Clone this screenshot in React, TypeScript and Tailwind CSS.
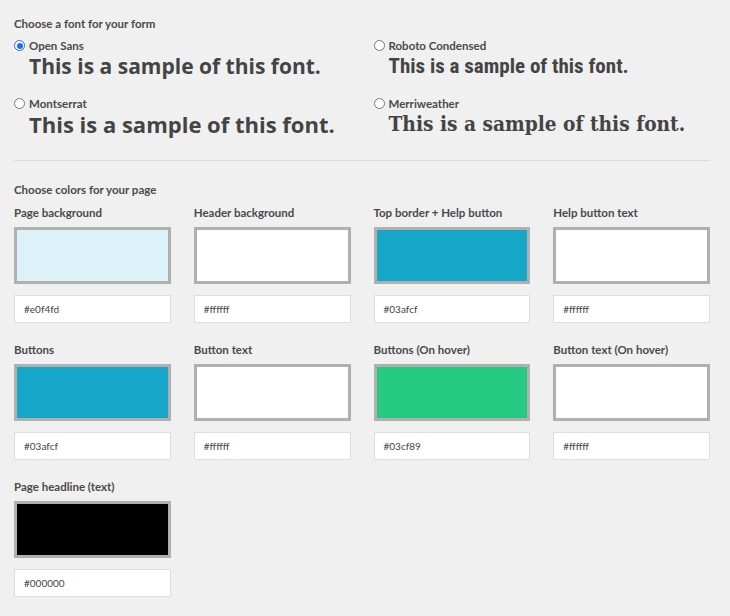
import React from "react";

const label = { fontFamily: "Lato, 'Open Sans', sans-serif" } as React.CSSProperties;

function Radio({ checked }: { checked?: boolean }) {
  return checked ? (
    <span className="w-[11px] h-[11px] rounded-full border border-[#1a73e8] bg-white flex items-center justify-center shrink-0">
      <span className="w-[6px] h-[6px] rounded-full bg-[#1a73e8]" />
    </span>
  ) : (
    <span className="w-[11px] h-[11px] rounded-full border border-[#767676] bg-white shrink-0" />
  );
}

function FontOption({ name, checked, sampleClass }: { name: string; checked?: boolean; sampleClass: string }) {
  return (
    <div className="flex flex-col">
      <div className="flex items-center gap-[4px] h-[13px]">
        <Radio checked={checked} />
        <span className="text-[11.5px] font-bold text-[#4a4a4a] leading-[13px]" style={label}>{name}</span>
      </div>
      <div className={"ml-[15px] text-[#444] font-bold whitespace-nowrap h-[28px] leading-[28px] " + sampleClass}>This is a sample of this font.</div>
    </div>
  );
}

function ColorField({ name, color, value }: { name: string; color: string; value: string }) {
  return (
    <div className="flex flex-col">
      <div className="text-[11.5px] font-bold text-[#4a4a4a] leading-[14px] mb-[7px]" style={label}>{name}</div>
      <div className="h-[57px] border-[3px] border-[#b0b0b0]" style={{ backgroundColor: color }} />
      <div className="mt-[11px] h-[28px] bg-white border border-[#dedede] flex items-center px-[9px] text-[10px] text-[#444]" style={label}>{value}</div>
    </div>
  );
}

export default function App() {
  return (
    <div className="w-[730px] h-[616px] bg-[#f0f0f0] px-[14px] pt-[17px] overflow-hidden">
      <div className="w-[696px]">
        <div className="text-[11.5px] font-bold text-[#4a4a4a] leading-[14px]" style={label}>Choose a font for your form</div>
        <div className="grid grid-cols-2 gap-x-[23px] gap-y-[17px] mt-[8px]">
          <FontOption name="Open Sans" checked sampleClass="text-[21px] font-['Open_Sans',sans-serif]" />
          <FontOption name="Roboto Condensed" sampleClass="text-[21px] font-['Roboto_Condensed','Liberation_Sans_Narrow',Roboto,sans-serif]" />
          <FontOption name="Montserrat" sampleClass="text-[22px] font-['Open_Sans',sans-serif]" />
          <FontOption name="Merriweather" sampleClass="text-[20.7px] font-['DejaVu_Serif',serif] font-stretch-condensed" />
        </div>
        <div className="mt-[22px] h-px bg-[#dcdcdc]" />
        <div className="mt-[22px] text-[11.5px] font-bold text-[#4a4a4a] leading-[14px]" style={label}>Choose colors for your page</div>
        <div className="grid grid-cols-4 gap-x-[23px] gap-y-[20px] mt-[9px]">
          <ColorField name="Page background" color="#dcf1f9" value="#e0f4fd" />
          <ColorField name="Header background" color="#ffffff" value="#ffffff" />
          <ColorField name="Top border + Help button" color="#16a7c9" value="#03afcf" />
          <ColorField name="Help button text" color="#ffffff" value="#ffffff" />
          <ColorField name="Buttons" color="#16a7c9" value="#03afcf" />
          <ColorField name="Button text" color="#ffffff" value="#ffffff" />
          <ColorField name="Buttons (On hover)" color="#25c97f" value="#03cf89" />
          <ColorField name="Button text (On hover)" color="#ffffff" value="#ffffff" />
          <ColorField name="Page headline (text)" color="#000000" value="#000000" />
        </div>
      </div>
    </div>
  );
}
